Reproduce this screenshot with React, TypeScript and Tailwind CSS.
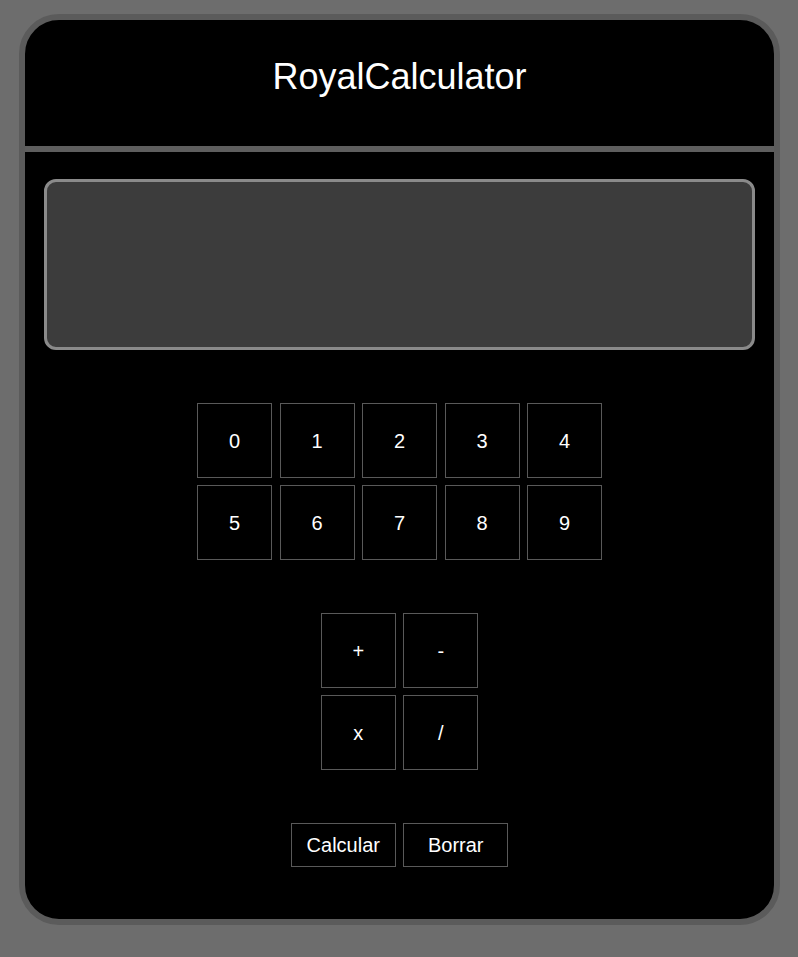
import { useState } from "react";

const digits = ["0", "1", "2", "3", "4", "5", "6", "7", "8", "9"];
const ops = ["+", "-", "x", "/"];

export default function App() {
  const [expr, setExpr] = useState("");

  const press = (v: string) => setExpr((e) => e + v);

  const calc = () => {
    try {
      // eslint-disable-next-line no-new-func
      const r = Function(`return (${expr.replace(/x/g, "*")})`)();
      setExpr(String(r));
    } catch {
      setExpr("Error");
    }
  };

  const key =
    "w-[75px] h-[75px] flex items-center justify-center border border-[#595959] bg-black text-white text-[20px]";

  return (
    <div className="min-h-screen bg-[#6d6d6d] pt-[14px] pl-[19px] font-['Liberation_Sans',Arial,sans-serif]">
      <div className="w-[761px] h-[911px] rounded-[40px] border-[6px] border-[#5b5b5b] bg-black overflow-hidden flex flex-col">
        <header className="h-[132px] border-b-[6px] border-[#5e5e5e] pt-[37px] text-center">
          <h1 className="text-white text-[36px] leading-[40px]">RoyalCalculator</h1>
        </header>

        <div className="pt-[27px] pl-[19px] pr-[19px]">
          <div className="h-[171px] rounded-[12px] border-[3px] border-[#8a8a8a] bg-[#3c3c3c] px-4 flex items-center justify-end text-white text-[32px]">
            {expr}
          </div>
        </div>

        <div className="mt-[53px] flex justify-center">
          <div className="grid grid-cols-5 gap-x-[7.5px] gap-y-[7px]">
            {digits.map((d) => (
              <button key={d} className={key} onClick={() => press(d)}>
                {d}
              </button>
            ))}
          </div>
        </div>

        <div className="mt-[53px] flex justify-center">
          <div className="grid grid-cols-2 gap-x-[7.5px] gap-y-[7px]">
            {ops.map((o) => (
              <button key={o} className={key} onClick={() => press(o)}>
                {o}
              </button>
            ))}
          </div>
        </div>

        <div className="mt-[53px] flex justify-center gap-[7.5px]">
          <button
            onClick={calc}
            className="w-[105px] h-[44px] border border-[#595959] bg-black text-white text-[20px]"
          >
            Calcular
          </button>
          <button
            onClick={() => setExpr("")}
            className="w-[105px] h-[44px] border border-[#595959] bg-black text-white text-[20px]"
          >
            Borrar
          </button>
        </div>
      </div>
    </div>
  );
}
